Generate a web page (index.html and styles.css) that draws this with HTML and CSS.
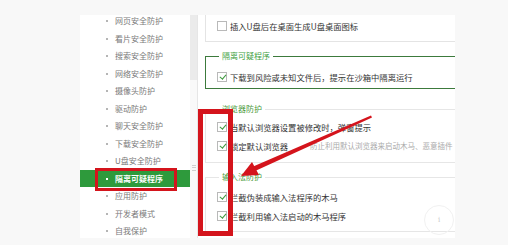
FILE: index.html
```html
<!DOCTYPE html>
<html lang="zh">
<head>
<meta charset="utf-8">
<link rel="stylesheet" href="styles.css">
</head>
<body>
<div class="page">
  <div class="window">
    <div class="sidebar">
      <ul class="menu">
        <li>网页安全防护</li>
        <li>看片安全防护</li>
        <li>搜索安全防护</li>
        <li>网络安全防护</li>
        <li>摄像头防护</li>
        <li>驱动防护</li>
        <li>聊天安全防护</li>
        <li>下载安全防护</li>
        <li>U盘安全防护</li>
        <li class="active">隔离可疑程序</li>
        <li>应用防护</li>
        <li>开发者模式</li>
        <li>自我保护</li>
      </ul>
    </div>
    <div class="scrollbar"><div class="thumb"><span class="grip"></span></div></div>
    <div class="main">
      <div class="card">
        <label class="row"><span class="cb"></span>插入U盘后在桌面生成U盘桌面图标</label>
      </div>
      <fieldset class="fs fs-green">
        <legend>隔离可疑程序</legend>
        <label class="row"><span class="cb on"></span>下载到风险或未知文件后，提示在沙箱中隔离运行</label>
      </fieldset>
      <fieldset class="fs fs-browser">
        <legend>浏览器防护</legend>
        <label class="row"><span class="cb on"></span>当默认浏览器设置被修改时，弹窗提示</label>
        <label class="row"><span class="cb on"></span>锁定默认浏览器<span class="hint">防止利用默认浏览器来启动木马、恶意插件</span></label>
      </fieldset>
      <fieldset class="fs fs-input">
        <legend>输入法防护</legend>
        <label class="row"><span class="cb on"></span>拦截伪装成输入法程序的木马</label>
        <label class="row"><span class="cb on"></span>拦截利用输入法启动的木马程序</label>
      </fieldset>
    </div>
  </div>
  <div class="mark-menu"></div>
  <div class="mark-checks"></div>
  <svg class="arrow" width="508" height="245" viewBox="0 0 508 245">
    <polygon points="371,115.5 372,117.5 254,171.5 252,167" fill="#d4141c"/>
    <polygon points="241,176 252,162 259,175" fill="#d4141c"/>
  </svg>
  <div class="watermark">i</div>
</div>
</body>
</html>
```
FILE: styles.css
```css
html, body {
  margin: 0;
  padding: 0;
}
body {
  background: #f8f8f8;
  font-family: "Noto Sans CJK SC", "Noto Sans", sans-serif;
  width: 508px;
  height: 245px;
  overflow: hidden;
}
.page {
  position: relative;
  width: 508px;
  height: 245px;
  padding-top: 15px;
  box-sizing: border-box;
}
.window {
  margin-left: 80px;
  width: 375px;
  height: 223px;
  background: #fff;
  display: flex;
  overflow: hidden;
}
.sidebar {
  width: 110px;
  flex: none;
  overflow: hidden;
}
.menu {
  list-style: none;
  margin: -3px 0 0 0;
  padding: 0;
}
.menu li {
  height: 17.5px;
  line-height: 17.5px;
  font-size: 8px;
  color: #7a7a7a;
  padding-left: 35px;
  position: relative;
  white-space: nowrap;
}
.menu li::before {
  content: "";
  position: absolute;
  left: 26px;
  top: 8px;
  width: 2px;
  height: 2px;
  background: #b5b5b5;
}
.menu li.active {
  background: #2e9a3c;
  color: #fff;
  font-weight: bold;
}
.menu li.active::before {
  background: #fff;
}
.scrollbar {
  width: 7px;
  flex: none;
  background: #ebebeb;
  border-right: 1px solid #e6e6e6;
  display: flex;
  flex-direction: column;
  justify-content: flex-end;
}
.thumb {
  height: 158px;
  background: #f9f9f9;
  display: flex;
  align-items: center;
  justify-content: center;
}
.grip {
  width: 4px;
  height: 4px;
  border-top: 1px solid #cfcfcf;
  border-bottom: 1px solid #cfcfcf;
  margin-top: 18px;
  position: relative;
}
.grip::after {
  content: "";
  position: absolute;
  left: 0;
  right: 0;
  top: 1px;
  border-top: 1px solid #cfcfcf;
}
.main {
  flex: 1;
  padding-left: 7px;
  overflow: hidden;
  color: #333;
  font-size: 8.3px;
}
.row {
  display: flex;
  align-items: center;
  height: 19px;
  white-space: nowrap;
}
.cb {
  width: 8px;
  height: 8px;
  border: 1px solid #b9b9b9;
  background: #fff;
  margin-right: 3px;
  flex: none;
  position: relative;
}
.cb.on::after {
  content: "";
  position: absolute;
  left: 2.5px;
  top: 0px;
  width: 2.5px;
  height: 5px;
  border: solid #3d9a3d;
  border-width: 0 1.3px 1.3px 0;
  transform: rotate(40deg);
}
.card {
  height: 27px;
  border-left: 1px solid #e4e4e4;
  border-bottom: 1px solid #e4e4e4;
  padding-left: 11px;
  box-sizing: border-box;
  margin-right: -10px;
}
.card .row {
  height: 22px;
}
.fs {
  margin: 0 -20px 0 0;
  padding: 0 0 0 11px;
  min-width: 0;
  border: 1px solid #e6e6e6;
  border-right: none;
}
.fs legend {
  font-size: 8px;
  line-height: 10px;
  height: 10px;
  padding: 0 3px;
  margin-left: 2px;
  color: #4a9a3a;
}
.fs-green {
  margin-top: 9px;
  border-color: #3c7a3c;
  padding-top: 6px;
  padding-bottom: 2px;
}
.fs-green legend {
  color: #3f9f3f;
}
.fs-browser {
  margin-top: 15px;
  padding-top: 3px;
  padding-bottom: 7px;
}
.fs-input {
  margin-top: 9px;
  padding-top: 5px;
  padding-bottom: 6px;
}
.hint {
  color: #ababab;
  margin-left: 22px;
  font-size: 7.5px;
}
.mark-menu {
  position: absolute;
  left: 95px;
  top: 168px;
  width: 76px;
  height: 17px;
  border: 3px solid #d4141c;
}
.mark-checks {
  position: absolute;
  left: 198px;
  top: 109px;
  width: 25px;
  height: 117px;
  border: 5px solid #d4141c;
}
.arrow {
  position: absolute;
  left: 0;
  top: 0;
}
.watermark {
  position: absolute;
  left: 424px;
  top: 205px;
  width: 28px;
  height: 28px;
  border-radius: 50%;
  border: 1px solid #f1f1f1;
  color: #c8c8c8;
  font-size: 7px;
  text-align: center;
  line-height: 28px;
  font-family: "DejaVu Serif", serif;
}
```
